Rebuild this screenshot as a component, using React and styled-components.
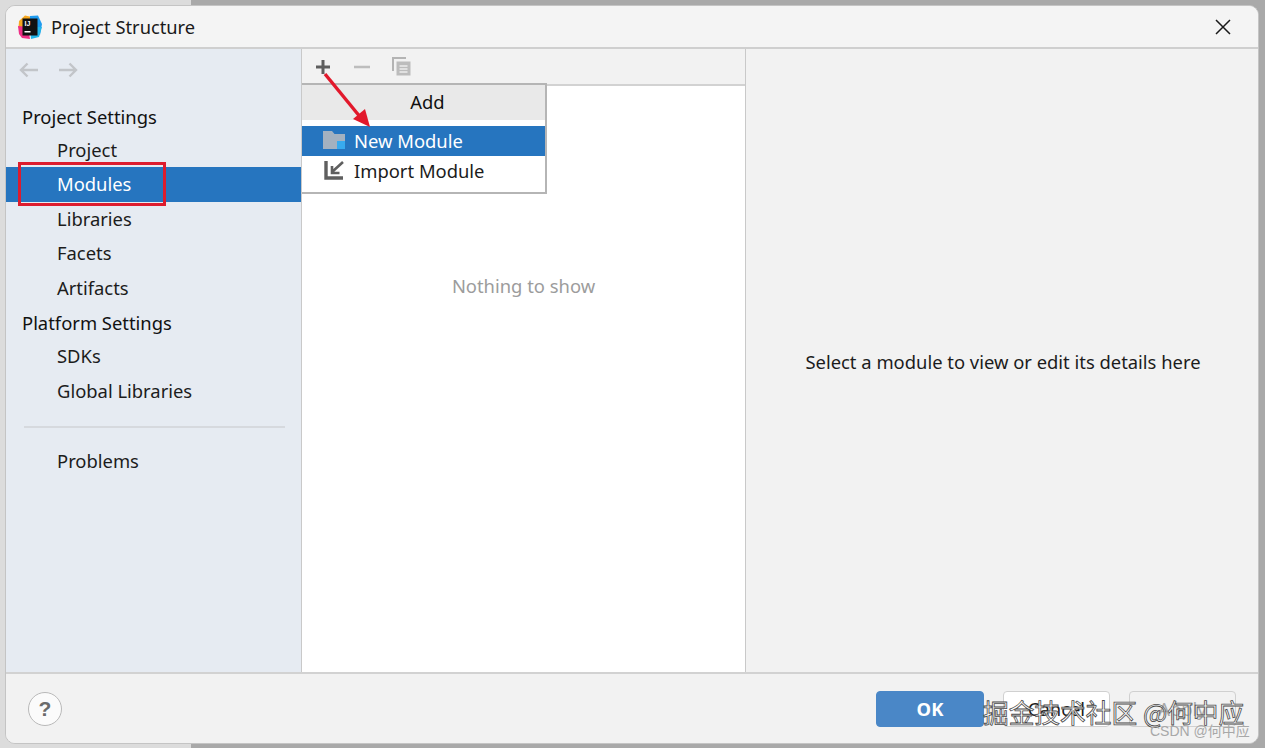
import React from "react";
import styled, { createGlobalStyle } from "styled-components";

const GlobalStyle = createGlobalStyle`
  html, body {
    margin: 0;
    padding: 0;
    height: 100%;
    overflow: hidden;
    font-family: "Noto Sans", "Open Sans", sans-serif;
  }
`;

const Page = styled.div`
  position: relative;
  width: 1265px;
  height: 748px;
  box-sizing: border-box;
  padding: 5px 6px 4px 5px;
  background: linear-gradient(to right, #dcdcdc 0, #dcdcdc 191px, #a9a9a9 191px, #a9a9a9 100%);
`;

const Window = styled.div`
  height: 100%;
  box-sizing: border-box;
  display: flex;
  flex-direction: column;
  background: #f2f2f2;
  border: 1px solid #c4c4c4;
  border-radius: 10px;
  overflow: hidden;
`;

const TitleBar = styled.div`
  height: 41px;
  flex: none;
  display: flex;
  align-items: center;
  padding: 0 27px 0 12px;
  gap: 9px;
  border-bottom: 2px solid #cfcfcf;
  background: #f4f4f4;
`;

const TitleText = styled.div`
  flex: 1;
  font-size: 18.3px;
  color: #1a1a1a;
`;

const Body = styled.div`
  flex: 1;
  min-height: 0;
  display: flex;
`;

const Sidebar = styled.div`
  width: 295px;
  flex: none;
  background: #e6ebf2;
  border-right: 1px solid #c9c9c9;
  padding-top: 7px;
`;

const NavArrows = styled.div`
  display: flex;
  gap: 19px;
  padding-left: 13px;
  height: 28px;
  align-items: center;
  margin-bottom: 16.5px;
`;

const SectionTitle = styled.div`
  height: 32px;
  line-height: 32px;
  margin-top: ${(props) => (props.spaced ? "2px" : "0")};
  padding-left: 16px;
  font-size: 18.4px;
  color: #111;
`;

const NavItem = styled.div`
  height: 34.6px;
  line-height: 34.6px;
  padding-left: 51px;
  font-size: 18.4px;
  color: ${(props) => (props.selected ? "#ffffff" : "#1c1c1c")};
  background: ${(props) => (props.selected ? "#2675bf" : "transparent")};
`;

const Divider = styled.div`
  height: 2px;
  margin: 17px 16px 16px 18px;
  background: #d6d9de;
`;

const ListPane = styled.div`
  width: 443px;
  flex: none;
  display: flex;
  flex-direction: column;
  background: #ffffff;
  border-right: 1px solid #c9c9c9;
`;

const ListToolbar = styled.div`
  height: 34px;
  flex: none;
  display: flex;
  align-items: center;
  gap: 21px;
  padding: 1px 0 0 12px;
  box-sizing: content-box;
  background: #f2f2f2;
  border-bottom: 2px solid #d2d2d2;
`;

const EmptyList = styled.div`
  flex: 1;
  display: flex;
  justify-content: center;
  padding: 187px 0 0 0;
  font-size: 18.4px;
  color: #9c9c9c;
`;

const DetailPane = styled.div`
  flex: 1;
  display: flex;
  align-items: center;
  justify-content: center;
  padding: 2px 0 0 2px;
  font-size: 18.4px;
  color: #1c1c1c;
  background: #f2f2f2;
`;

const Footer = styled.div`
  height: 69px;
  flex: none;
  display: flex;
  align-items: center;
  justify-content: space-between;
  padding: 0 22px 0 22px;
  border-top: 2px solid #d2d2d2;
  background: #f2f2f2;
`;

const HelpButton = styled.div`
  width: 32px;
  height: 32px;
  border-radius: 50%;
  border: 1px solid #b9b9b9;
  background: #fbfbfb;
  display: flex;
  align-items: center;
  justify-content: center;
  font-family: "Liberation Sans", sans-serif;
  font-weight: 700;
  font-size: 21px;
  color: #6b6b6b;
`;

const FooterButtons = styled.div`
  display: flex;
  gap: 19px;
`;

const DialogButton = styled.div`
  width: ${(props) => (props.primary ? "108px" : "107px")};
  height: 36px;
  box-sizing: border-box;
  border-radius: 4px;
  display: flex;
  align-items: center;
  justify-content: center;
  font-size: 18.4px;
  font-weight: ${(props) => (props.primary ? 700 : 400)};
  color: ${(props) => (props.primary ? "#ffffff" : props.disabled ? "#a8a8a8" : "#1c1c1c")};
  background: ${(props) => (props.primary ? "#4a87c7" : props.disabled ? "#f2f2f2" : "#ffffff")};
  border: 1px solid ${(props) => (props.primary ? "#4a87c7" : "#d0d0d0")};
`;

const PopupMenu = styled.div`
  position: absolute;
  left: 302px;
  top: 83px;
  width: 245px;
  box-sizing: border-box;
  padding-bottom: 6px;
  background: #ffffff;
  border: 2px solid #b5b5b5;
  border-left: none;
`;

const PopupHeader = styled.div`
  height: 35px;
  box-sizing: border-box;
  display: flex;
  align-items: center;
  justify-content: center;
  padding: 0 0 2px 8px;
  font-size: 18.4px;
  color: #111;
  background: #e9e9e9;
  margin-bottom: 6px;
`;

const PopupItem = styled.div`
  height: 30px;
  box-sizing: border-box;
  display: flex;
  align-items: center;
  gap: 8px;
  padding: 0 0 2px 20px;
  font-size: 18.4px;
  color: ${(props) => (props.selected ? "#ffffff" : "#1c1c1c")};
  background: ${(props) => (props.selected ? "#2675bf" : "transparent")};
`;

const RedBox = styled.div`
  position: absolute;
  left: 18px;
  top: 162px;
  width: 148px;
  height: 44px;
  box-sizing: border-box;
  border: 3px solid #dd1c2e;
`;

const ArrowLayer = styled.svg`
  position: absolute;
  left: 315px;
  top: 68px;
`;

const WatermarkMain = styled.div`
  position: absolute;
  left: 983px;
  top: 695px;
  font-family: "Noto Sans CJK SC", sans-serif;
  font-size: 25.7px;
  line-height: 34px;
  white-space: nowrap;
  color: rgba(255, 255, 255, 0.75);
  -webkit-text-stroke: 0.8px #4a4a4a;
`;

const WatermarkSmall = styled.div`
  position: absolute;
  left: 1150px;
  top: 722px;
  font-family: "Liberation Sans", "Noto Sans CJK SC", sans-serif;
  font-size: 14px;
  line-height: 18px;
  white-space: nowrap;
  color: #a8a8a8;
`;

function IdeaLogo() {
  return (
    <svg width="24" height="24" viewBox="0 0 24 24">
      <path d="M1 6 L7 0.5 L14 2 L12 12 L0.5 13 Z" fill="#f7a81f" />
      <path d="M12 1 L20 0.5 L24 9 L22 20 L12 14 Z" fill="#1f9bef" />
      <path d="M12 12 L24 12 L21 22 L13 24 Z" fill="#22b5e8" />
      <path d="M0 11 L10 12 L12 24 L4 23 L1 19 Z" fill="#ef2f86" />
      <rect x="4.5" y="3.5" width="15" height="17" fill="#111" />
      <text x="6.5" y="10.5" fontSize="7" fontWeight="700" fontFamily="Liberation Sans" fill="#fff">IJ</text>
      <rect x="6.5" y="16" width="6" height="1.5" fill="#fff" />
    </svg>
  );
}

function NavArrow({ flip }) {
  return (
    <svg width="20" height="16" viewBox="0 0 20 16" style={flip ? { transform: "scaleX(-1)" } : undefined}>
      <path d="M19 8H2M8.5 1.5 2 8l6.5 6.5" fill="none" stroke="#c2c5c9" strokeWidth="2.4" />
    </svg>
  );
}

function FolderIcon() {
  return (
    <svg width="24" height="22" viewBox="0 0 24 22">
      <path d="M1 2h9l2.5 3H23v15H1Z" fill="#a3b1c0" />
      <rect x="15" y="12" width="8" height="8" fill="#38aaee" />
    </svg>
  );
}

function ImportIcon() {
  return (
    <svg width="24" height="20" viewBox="0 0 24 20">
      <path d="M4 1v17h17" fill="none" stroke="#5f5f5f" strokeWidth="3.4" />
      <path d="M21 2 10 12M10 6v7h7.5" fill="none" stroke="#5f5f5f" strokeWidth="2.6" />
    </svg>
  );
}

function CloseIcon() {
  return (
    <svg width="16" height="16" viewBox="0 0 16 16">
      <path d="M1 1 15 15M15 1 1 15" stroke="#1a1a1a" strokeWidth="1.5" fill="none" />
    </svg>
  );
}

function PlusIcon() {
  return (
    <svg width="18" height="18" viewBox="0 0 18 18">
      <path d="M9 2v14M2 9h14" stroke="#5e5e5e" strokeWidth="3" fill="none" />
    </svg>
  );
}

function MinusIcon() {
  return (
    <svg width="18" height="18" viewBox="0 0 18 18">
      <path d="M1 9h16" stroke="#bdbdbd" strokeWidth="2.6" fill="none" />
    </svg>
  );
}

function CopyIcon() {
  return (
    <svg width="20" height="20" viewBox="0 0 20 20">
      <path d="M1 14V1h13" fill="none" stroke="#b4b4b4" strokeWidth="2" />
      <rect x="4.5" y="4.5" width="14" height="14" fill="#bcbcbc" />
      <path d="M7.5 9h8M7.5 12h8M7.5 15h8" stroke="#ececec" strokeWidth="1.4" />
    </svg>
  );
}

export default function App() {
  return (
    <Page>
      <GlobalStyle />
      <Window>
        <TitleBar>
          <IdeaLogo />
          <TitleText>Project Structure</TitleText>
          <CloseIcon />
        </TitleBar>
        <Body>
          <Sidebar>
            <NavArrows>
              <NavArrow />
              <NavArrow flip />
            </NavArrows>
            <SectionTitle>Project Settings</SectionTitle>
            <NavItem>Project</NavItem>
            <NavItem selected>Modules</NavItem>
            <NavItem>Libraries</NavItem>
            <NavItem>Facets</NavItem>
            <NavItem>Artifacts</NavItem>
            <SectionTitle spaced>Platform Settings</SectionTitle>
            <NavItem>SDKs</NavItem>
            <NavItem>Global Libraries</NavItem>
            <Divider />
            <NavItem>Problems</NavItem>
          </Sidebar>
          <ListPane>
            <ListToolbar>
              <PlusIcon />
              <MinusIcon />
              <CopyIcon />
            </ListToolbar>
            <EmptyList>Nothing to show</EmptyList>
          </ListPane>
          <DetailPane>Select a module to view or edit its details here</DetailPane>
        </Body>
        <Footer>
          <HelpButton>?</HelpButton>
          <FooterButtons>
            <DialogButton primary>OK</DialogButton>
            <DialogButton>Cancel</DialogButton>
            <DialogButton disabled>Apply</DialogButton>
          </FooterButtons>
        </Footer>
      </Window>
      <PopupMenu>
        <PopupHeader>Add</PopupHeader>
        <PopupItem selected>
          <FolderIcon />
          New Module
        </PopupItem>
        <PopupItem>
          <ImportIcon />
          Import Module
        </PopupItem>
      </PopupMenu>
      <RedBox />
      <ArrowLayer width="60" height="62" viewBox="0 0 60 62">
        <path d="M10 6 46 50" stroke="#e2182b" strokeWidth="3.4" fill="none" />
        <path d="M55 59 38 51 50 41Z" fill="#e2182b" />
      </ArrowLayer>
      <WatermarkMain>掘金技术社区 @何中应</WatermarkMain>
      <WatermarkSmall>CSDN @何中应</WatermarkSmall>
    </Page>
  );
}
